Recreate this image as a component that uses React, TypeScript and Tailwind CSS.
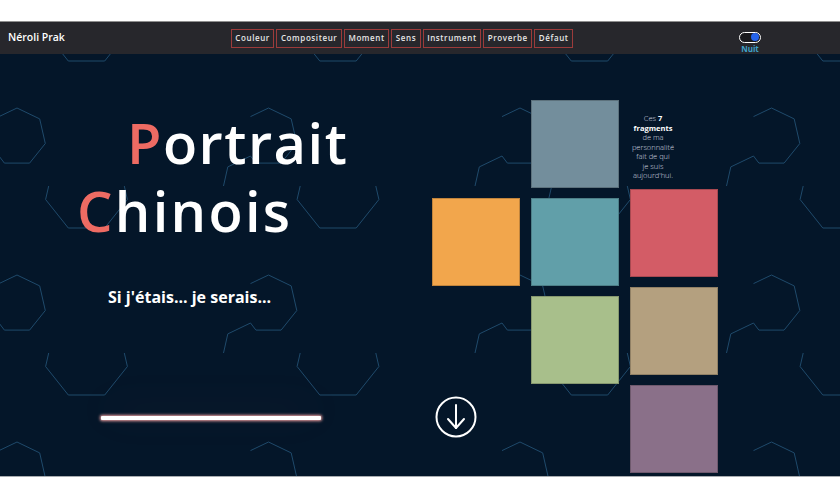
import React from "react";

const TW = 251.5;
const TH = 167;
const SHAPE_A =
  "M-1 62.6 L17 54 L39.7 64.9 L45.3 89.5 L29.6 109.1 L4.4 109.1 L-1 102 L-23.7 112.9 L-28 132";
const SHAPE_B =
  "M48.7 132 L45.6 145.5 L68.3 174 L104.7 174 L127.4 145.5 L124.3 132";

function Pattern() {
  const items: React.ReactElement[] = [];
  for (let i = -1; i <= 4; i++) {
    for (let j = -1; j <= 3; j++) {
      items.push(
        <g key={`${i}-${j}`} transform={`translate(${i * TW} ${j * TH})`}>
          <path d={SHAPE_A} />
          <path d={SHAPE_B} />
        </g>
      );
    }
  }
  return (
    <svg
      className="absolute inset-0"
      width="840"
      height="422"
      fill="none"
      stroke="#1f4a6b"
      strokeWidth="1"
    >
      {items}
    </svg>
  );
}

const NAV = ["Couleur", "Compositeur", "Moment", "Sens", "Instrument", "Proverbe", "Défaut"];

function Square({ color }: { color: string }) {
  return <div className={`h-[88px] w-[88px] border border-black/20 ${color}`} />;
}

export default function App() {
  return (
    <div
      className="flex h-[500px] w-[840px] flex-col bg-white"
      style={{ fontFamily: '"Open Sans", "Noto Sans", sans-serif' }}
    >
      <div className="h-[22px] border-b border-[#8f8f8f] bg-white" />
      <nav className="flex h-[32px] items-center justify-between bg-[#27272c] pl-[8px] pr-[79px]">
        <div className="text-[10.5px] font-semibold text-white">Néroli Prak</div>
        <div className="flex gap-[2px]">
          {NAV.map((n) => (
            <div
              key={n}
              className="flex h-[19px] items-center border border-[#9c3b3b] px-[3.5px] text-[8px] font-semibold tracking-[0.6px] text-[#e6e6e6]"
            >
              {n}
            </div>
          ))}
        </div>
        <div className="mt-[8px] flex flex-col items-center">
          <div className="flex h-[11px] w-[22px] items-center justify-end rounded-full border-[1.5px] border-white bg-[#1a1a1e] pr-[1px]">
            <div className="h-[8px] w-[8px] rounded-full bg-[#2563eb]" />
          </div>
          <span className="mt-[2px] text-[8px] font-bold leading-none text-[#3fa1c9]">Nuit</span>
        </div>
      </nav>
      <main className="relative h-[422px] overflow-hidden bg-[#041629]">
        <Pattern />
        <div className="relative flex h-full">
          <section className="flex w-[432px] flex-col pt-[54px] text-white">
            <h1 className="text-[56px] font-semibold leading-[68px]">
              <div className="pl-[127px] tracking-[1.5px]">
                <span className="inline-block text-[#ee6b63]">P</span>ortrait
              </div>
              <div className="pl-[77px] tracking-[2.3px]">
                <span className="inline-block text-[#ee6b63]">C</span>hinois
              </div>
            </h1>
            <p className="mt-[43px] pl-[108px] text-[16px] font-bold leading-[20px]">
              Si j'étais... je serais...
            </p>
            <div className="ml-[101px] mt-[109px] h-[4px] w-[220px] rounded-[1px] bg-white shadow-[0_0_3px_1px_#f4a3a3,0_-8px_44px_2px_rgba(255,150,140,0.09)]" />
          </section>
          <section className="flex items-start gap-[11px]">
            <div className="mt-[144px] flex flex-col">
              <Square color="bg-[#f2a64c]" />
              <svg className="ml-[3px] mt-[110px]" width="42" height="42" viewBox="0 0 42 42" fill="none" stroke="white" strokeWidth="2" strokeLinecap="round" strokeLinejoin="round">
                <circle cx="21" cy="21" r="19.5" />
                <path d="M21 9 L21 32" />
                <path d="M13 23 L21 32 L29 23" />
              </svg>
            </div>
            <div className="mt-[46px] flex flex-col gap-[10px]">
              <Square color="bg-[#738e9c]" />
              <Square color="bg-[#619fa9]" />
              <Square color="bg-[#a8bf8b]" />
            </div>
            <div className="mt-[55px] flex flex-col gap-[10px]">
              <div className="-ml-[1px] h-[70px] w-[48px] pt-[5px] text-center text-[7.5px] font-light leading-[9.5px] text-[#d6dae0]">
                Ces <b className="font-bold text-white">7</b>
                <br />
                <b className="font-bold text-white">fragments</b>
                <br />
                de ma
                <br />
                personnalité
                <br />
                fait de qui
                <br />
                je suis
                <br />
                aujourd'hui.
              </div>
              <Square color="bg-[#d35c66]" />
              <Square color="bg-[#b4a07f]" />
              <Square color="bg-[#8a7089]" />
            </div>
          </section>
        </div>
      </main>
      <div className="flex-1 border-t border-[#a8acb0] bg-white" />
    </div>
  );
}
